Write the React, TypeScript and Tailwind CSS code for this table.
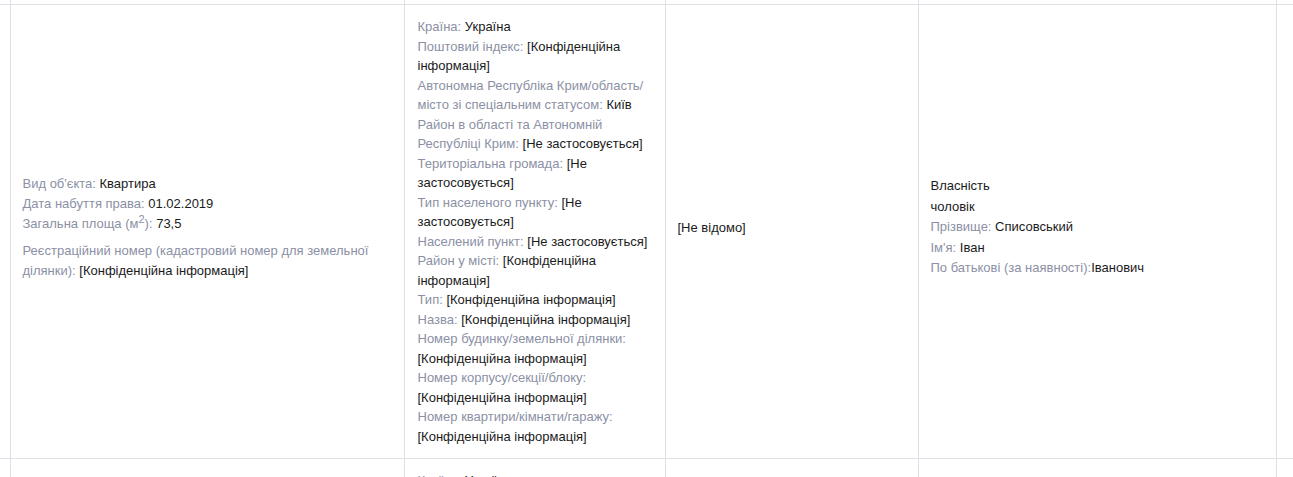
import React from 'react';

const Label = ({ children }: { children: React.ReactNode }) => (
  <span className="text-[#8b90a5]">{children}</span>
);

const Line = ({ label, value }: { label: string; value: React.ReactNode }) => (
  <div>
    <Label>{label}</Label> <span className="text-[#1b1b1b]">{value}</span>
  </div>
);

const ObjectCell = () => (
  <div className="leading-[20px]">
    <Line label="Вид об'єкта:" value="Квартира" />
    <Line label="Дата набуття права:" value="01.02.2019" />
    <div>
      <Label>
        Загальна площа (м<sup className="text-[11px]">2</sup>):
      </Label>{' '}
      <span className="text-[#1b1b1b]">73,5</span>
    </div>
    <div className="mt-[7px]">
      <Label>Реєстраційний номер (кадастровий номер для земельної ділянки):</Label>{' '}
      <span className="text-[#1b1b1b]">[Конфіденційна інформація]</span>
    </div>
  </div>
);

const AddressCell = () => (
  <div className="leading-[19.5px]">
    <Line label="Країна:" value="Україна" />
    <Line label="Поштовий індекс:" value="[Конфіденційна інформація]" />
    <Line label="Автономна Республіка Крим/область/ місто зі спеціальним статусом:" value="Київ" />
    <Line label="Район в області та Автономній Республіці Крим:" value="[Не застосовується]" />
    <Line label="Територіальна громада:" value="[Не застосовується]" />
    <Line label="Тип населеного пункту:" value="[Не застосовується]" />
    <Line label="Населений пункт:" value="[Не застосовується]" />
    <Line label="Район у місті:" value="[Конфіденційна інформація]" />
    <Line label="Тип:" value="[Конфіденційна інформація]" />
    <Line label="Назва:" value="[Конфіденційна інформація]" />
    <Line label="Номер будинку/земельної ділянки:" value="[Конфіденційна інформація]" />
    <Line label="Номер корпусу/секції/блоку:" value="[Конфіденційна інформація]" />
    <Line label="Номер квартири/кімнати/гаражу:" value="[Конфіденційна інформація]" />
  </div>
);

const OwnerCell = () => (
  <div className="leading-[20.5px] text-[#1b1b1b]">
    <div>Власність</div>
    <div>чоловік</div>
    <Line label="Прізвище:" value="Списовський" />
    <Line label="Ім'я:" value="Іван" />
    <div>
      <Label>По батькові (за наявності):</Label>
      <span>Іванович</span>
    </div>
  </div>
);

const line = 'border border-[#dfdfe6]';
// middle cells sit a little above the row centre in the reference
const cell = `${line} align-middle px-[12px] pt-[8px] pb-[16px]`;

export default function App() {
  return (
    <div className="h-[477px] overflow-hidden bg-white font-['Liberation_Sans',Arial,sans-serif] text-[13px]">
      <table className="border-collapse table-fixed w-[1310px] -mt-px">
        <colgroup>
          <col className="w-[10px]" />
          <col className="w-[394px]" />
          <col className="w-[261px]" />
          <col className="w-[253px]" />
          <col className="w-[358px]" />
          <col />
        </colgroup>
        <tbody>
          <tr className="h-[5px]">
            <td className={`${line} border-l-0`} />
            <td className={line} />
            <td className={line} />
            <td className={line} />
            <td className={line} />
            <td className={line} />
          </tr>
          {[0, 1].map((i) => (
            <tr key={i}>
              <td className={`${line} border-l-0`} />
              <td className={cell}>
                <ObjectCell />
              </td>
              <td className={`${line} align-top px-[13px] py-[12px]`}>
                <AddressCell />
              </td>
              <td className={cell}>
                <span className="text-[#1b1b1b]">[Не відомо]</span>
              </td>
              <td className={cell}>
                <OwnerCell />
              </td>
              <td className={line} />
            </tr>
          ))}
        </tbody>
      </table>
    </div>
  );
}
